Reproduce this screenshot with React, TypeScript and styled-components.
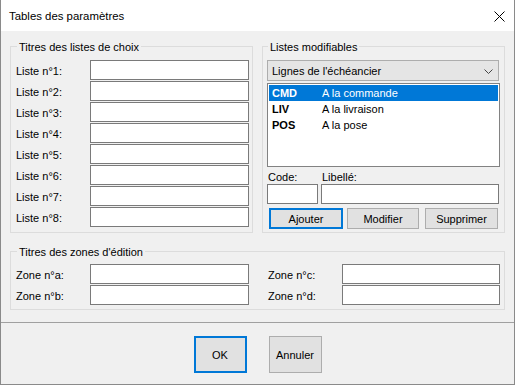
import React from "react";
import styled, { createGlobalStyle } from "styled-components";

const GlobalStyle = createGlobalStyle`
  html, body { margin: 0; padding: 0; background: #ffffff; }
  body {
    font-family: "Liberation Sans", Arial, sans-serif;
    font-size: 11px;
    color: #000000;
  }
  * { box-sizing: border-box; }
`;

const Window = styled.div`
  width: 515px;
  height: 385px;
  border: 1px solid #8a8a8a;
  border-top: none;
  background: #f0f0f0;
  display: flex;
  flex-direction: column;
`;

const TitleBar = styled.div`
  height: 31px;
  flex: none;
  background: #ffffff;
  display: flex;
  align-items: center;
  justify-content: space-between;
  padding: 0 9px 0 8px;
`;

const TitleText = styled.div`
  font-size: 11.4px;
  line-height: 16px;
  color: #000000;
`;

const CloseButton = styled.div`
  width: 12px;
  height: 12px;
  display: flex;
  align-items: center;
  justify-content: center;
  margin-top: 1px;
`;

const Body = styled.div`
  height: 291px;
  flex: none;
  padding: 15px 9px 0 9px;
  display: flex;
  flex-direction: column;
`;

const TopRow = styled.div`
  display: flex;
  gap: 9px;
`;

const Group = styled.div<{ $w: number; $h: number; $pt: number }>`
  position: relative;
  width: ${(p) => p.$w}px;
  height: ${(p) => p.$h}px;
  border: 1px solid #dcdcdc;
  padding: ${(p) => p.$pt}px 0 0 5px;
`;

const Legend = styled.div<{ $left: number }>`
  position: absolute;
  top: -6px;
  left: ${(p) => p.$left}px;
  padding: 0 2px;
  background: #f0f0f0;
  line-height: 13px;
`;

const FieldList = styled.div`
  display: flex;
  flex-direction: column;
  gap: 1px;
`;

const FieldRow = styled.div`
  display: flex;
  align-items: center;
  height: 20px;
`;

const Label = styled.div`
  width: 74px;
  flex: none;
  padding-top: 2px;
  line-height: 13px;
  white-space: nowrap;
`;

const TextBox = styled.input<{ $w: number }>`
  width: ${(p) => p.$w}px;
  height: 20px;
  flex: none;
  margin: 0;
  padding: 0 3px;
  border: 1px solid #7a7a7a;
  background: #ffffff;
  font: inherit;
  outline: none;
`;

const ListColumn = styled.div`
  display: flex;
  flex-direction: column;
  padding-left: 4px;
  margin-left: -5px;
`;

const Select = styled.div`
  width: 232px;
  height: 21px;
  border: 1px solid #adadad;
  background: #e5e5e5;
  display: flex;
  align-items: center;
  justify-content: space-between;
  padding: 1px 5px 0 4px;
  line-height: 13px;
`;

const ListBox = styled.div`
  width: 233px;
  height: 84px;
  margin-top: 2px;
  border: 1px solid #828282;
  background: #ffffff;
  padding: 1px;
  display: flex;
  flex-direction: column;
`;

const ListItem = styled.div<{ $selected?: boolean }>`
  height: 16px;
  display: flex;
  align-items: center;
  padding-left: 3px;
  line-height: 13px;
  background: ${(p) => (p.$selected ? "#0078d7" : "transparent")};
  color: ${(p) => (p.$selected ? "#ffffff" : "#000000")};
`;

const ItemCode = styled.span`
  width: 50px;
  font-weight: bold;
`;

const EditGrid = styled.div`
  display: grid;
  grid-template-columns: 51px 178px;
  column-gap: 3px;
  grid-template-rows: 17px 20px;
`;

const SmallLabel = styled.div`
  align-self: end;
  line-height: 13px;
  padding-left: 1px;
`;

const ButtonRow = styled.div`
  display: flex;
  margin-top: 4px;
  padding-left: 2px;
`;

const Button = styled.div<{ $w: number; $h: number; $ml?: number; $default?: boolean }>`
  width: ${(p) => p.$w}px;
  height: ${(p) => p.$h}px;
  margin-left: ${(p) => p.$ml ?? 0}px;
  border: ${(p) => (p.$default ? "2px solid #0078d7" : "1px solid #adadad")};
  background: #e1e1e1;
  display: flex;
  align-items: center;
  justify-content: center;
  line-height: 13px;
  padding-top: 1px;
`;

const ZoneGroup = styled(Group)`
  margin-top: 18px;
`;

const ZoneGrid = styled.div`
  display: grid;
  grid-template-columns: 233px 232px;
  column-gap: 19px;
  row-gap: 1px;
`;

const Footer = styled.div`
  flex: 1;
  border-top: 1px solid #a0a0a0;
  display: flex;
  justify-content: center;
  gap: 22px;
  padding-top: 13px;
`;

const listes = [1, 2, 3, 4, 5, 6, 7, 8];

const items = [
  { code: "CMD", label: "A la commande", selected: true },
  { code: "LIV", label: "A la livraison" },
  { code: "POS", label: "A la pose" },
];

export default function App() {
  return (
    <>
      <GlobalStyle />
      <Window>
        <TitleBar>
          <TitleText>Tables des paramètres</TitleText>
          <CloseButton>
            <svg width="11" height="11" viewBox="0 0 11 11">
              <path d="M0.5 0.5 L10.5 10.5 M10.5 0.5 L0.5 10.5" stroke="#000" strokeWidth="1" fill="none" />
            </svg>
          </CloseButton>
        </TitleBar>
        <Body>
          <TopRow>
            <Group $w={243} $h={187} $pt={13}>
              <Legend $left={6}>Titres des listes de choix</Legend>
              <FieldList>
                {listes.map((n) => (
                  <FieldRow key={n}>
                    <Label>Liste n°{n}:</Label>
                    <TextBox $w={159} readOnly />
                  </FieldRow>
                ))}
              </FieldList>
            </Group>
            <Group $w={243} $h={187} $pt={13}>
              <Legend $left={5}>Listes modifiables</Legend>
              <ListColumn>
                <Select>
                  <span>Lignes de l'échéancier</span>
                  <svg width="9" height="5" viewBox="0 0 9 5">
                    <path d="M0.5 0.5 L4.5 4.5 L8.5 0.5" stroke="#444" strokeWidth="1" fill="none" />
                  </svg>
                </Select>
                <ListBox>
                  {items.map((it) => (
                    <ListItem key={it.code} $selected={it.selected}>
                      <ItemCode>{it.code}</ItemCode>
                      <span>{it.label}</span>
                    </ListItem>
                  ))}
                </ListBox>
                <EditGrid>
                  <SmallLabel>Code:</SmallLabel>
                  <SmallLabel>Libellé:</SmallLabel>
                  <TextBox $w={51} readOnly />
                  <TextBox $w={178} readOnly />
                </EditGrid>
                <ButtonRow>
                  <Button $w={74} $h={21} $default>Ajouter</Button>
                  <Button $w={72} $h={21} $ml={4}>Modifier</Button>
                  <Button $w={73} $h={21} $ml={6}>Supprimer</Button>
                </ButtonRow>
              </ListColumn>
            </Group>
          </TopRow>
          <ZoneGroup $w={495} $h={59} $pt={12}>
            <Legend $left={6}>Titres des zones d'édition</Legend>
            <ZoneGrid>
              <FieldRow>
                <Label>Zone n°a:</Label>
                <TextBox $w={159} readOnly />
              </FieldRow>
              <FieldRow>
                <Label>Zone n°c:</Label>
                <TextBox $w={158} readOnly />
              </FieldRow>
              <FieldRow>
                <Label>Zone n°b:</Label>
                <TextBox $w={159} readOnly />
              </FieldRow>
              <FieldRow>
                <Label>Zone n°d:</Label>
                <TextBox $w={158} readOnly />
              </FieldRow>
            </ZoneGrid>
          </ZoneGroup>
        </Body>
        <Footer>
          <Button $w={53} $h={37} $default>OK</Button>
          <Button $w={53} $h={37}>Annuler</Button>
        </Footer>
      </Window>
    </>
  );
}
